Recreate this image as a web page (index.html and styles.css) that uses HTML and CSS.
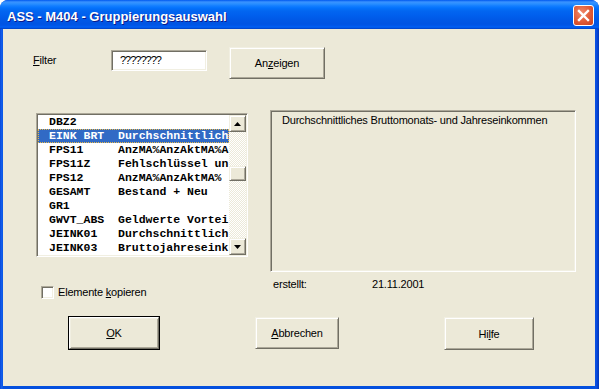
FILE: index.html
```html
<!DOCTYPE html>
<html lang="de">

<head>
    <meta charset="UTF-8">
    <meta name="viewport" content="width=device-width, initial-scale=1.0">
    <link rel="stylesheet" href="styles.css">
    <title>ASS - M404 - Gruppierungsauswahl</title>
</head>

<body>

    <div class="window">
        <header class="titlebar">
            <span class="title">ASS - M404 - Gruppierungsauswahl</span>
            <button class="close-btn">
                <svg width="19" height="19" viewBox="0 0 19 19">
                    <path d="M5 5 L14 14 M14 5 L5 14" stroke="#fff" stroke-width="2.4" stroke-linecap="square" />
                </svg>
            </button>
        </header>

        <div class="client">

            <div class="filter-row">
                <span class="filter-label"><u>F</u>ilter</span>
                <div class="textbox">????????</div>
                <div class="btn btn-show">An<u>z</u>eigen</div>
            </div>

            <div class="main">
                <div class="left-col">
                    <div class="listbox">
                        <div class="list-rows">
                            <div class="row"><span class="key">DBZ2</span></div>
                            <div class="row selected"><span class="key">EINK BRT</span><span class="desc">Durchschnittlich</span></div>
                            <div class="row"><span class="key">FPS11</span><span class="desc">AnzMA%AnzAktMA%A</span></div>
                            <div class="row"><span class="key">FPS11Z</span><span class="desc">Fehlschlüssel un</span></div>
                            <div class="row"><span class="key">FPS12</span><span class="desc">AnzMA%AnzAktMA%</span></div>
                            <div class="row"><span class="key">GESAMT</span><span class="desc">Bestand + Neu</span></div>
                            <div class="row"><span class="key">GR1</span></div>
                            <div class="row"><span class="key">GWVT_ABS</span><span class="desc">Geldwerte Vortei</span></div>
                            <div class="row"><span class="key">JEINK01</span><span class="desc">Durchschnittlich</span></div>
                            <div class="row"><span class="key">JEINK03</span><span class="desc">Bruttojahreseink</span></div>
                        </div>
                        <div class="scrollbar">
                            <div class="sb-btn">
                                <svg width="7" height="4" viewBox="0 0 7 4"><path d="M3.5 0 L7 4 L0 4 Z" fill="#000" /></svg>
                            </div>
                            <div class="sb-track">
                                <div class="sb-thumb"></div>
                            </div>
                            <div class="sb-btn">
                                <svg width="7" height="4" viewBox="0 0 7 4"><path d="M0 0 L7 0 L3.5 4 Z" fill="#000" /></svg>
                            </div>
                        </div>
                    </div>

                    <div class="check-row">
                        <span class="checkbox"></span>
                        <span>Elemente <u>k</u>opieren</span>
                    </div>
                </div>

                <div class="right-col">
                    <div class="desc-box">Durchschnittliches Bruttomonats- und Jahreseinkommen</div>
                    <div class="info-row">
                        <span class="info-label">erstellt:</span>
                        <span>21.11.2001</span>
                    </div>
                </div>
            </div>

            <div class="button-row">
                <div class="btn btn-ok"><u>O</u>K</div>
                <div class="btn btn-cancel"><u>A</u>bbrechen</div>
                <div class="btn btn-help">Hi<u>l</u>fe</div>
            </div>

        </div>
    </div>

</body>

</html>
```

FILE: styles.css
```css
body {
    margin: 0;
    padding: 0;
    background: #fff;
    font-family: "Liberation Sans", Arial, sans-serif;
    font-size: 11px;
    letter-spacing: -0.2px;
    color: #000;
}

.window {
    width: 599px;
    height: 389px;
    display: flex;
    flex-direction: column;
    background: linear-gradient(to right, #0A48D8, #1462F0 2px, #0450DE 3px, #0450DE 595px, #0B4FE6 596px, #0036B8);
    border-radius: 8px 8px 0 0;
    overflow: hidden;
}

.titlebar {
    height: 29px;
    flex: none;
    display: flex;
    align-items: center;
    justify-content: space-between;
    padding: 0 5px 0 7px;
    background: linear-gradient(#0058EE 0, #3A93FF 2px, #288EFF 4px, #127DFF 6px, #0472FC 8px, #0266F0 11px, #0060EE 15px, #0058E6 20px, #0054E3 24px, #0058EB 26px, #0061F6 27px, #0052DF 28px, #003DBE 29px);
}

.title {
    color: #fff;
    font-weight: bold;
    font-size: 13px;
    letter-spacing: 0;
    line-height: 16px;
    padding-top: 4px;
    text-shadow: 1px 1px #0C1A8A;
}

.close-btn {
    width: 21px;
    height: 21px;
    margin-top: 2px;
    padding: 0;
    border: 1px solid #fff;
    border-radius: 3px;
    background: radial-gradient(circle at 40% 35%, #F08A6C, #E05A36 55%, #C8401E);
    display: flex;
    align-items: center;
    justify-content: center;
}

.client {
    flex: 1;
    margin: 0 4px 3px 3px;
    background: #ECE9D8;
    display: flex;
    flex-direction: column;
}

.filter-row {
    display: flex;
    align-items: flex-start;
    height: 32px;
    margin-top: 18px;
    padding-left: 30px;
}

.filter-label {
    width: 78px;
    line-height: 13px;
    margin-top: 7px;
}

.textbox {
    width: 86px;
    height: 19px;
    margin-top: 3px;
    padding-left: 8px;
    line-height: 19px;
    letter-spacing: -1px;
    background: #fff;
    border: 1px solid;
    border-color: #ACA899 #fff #fff #ACA899;
    box-shadow: inset 1px 1px #716F64, inset -1px -1px #F1EFE2;
}

.btn {
    display: flex;
    align-items: center;
    justify-content: center;
    box-sizing: border-box;
    background: #ECE9D8;
    border: 1px solid;
    border-color: #F1EFE2 #716F64 #716F64 #F1EFE2;
    box-shadow: inset 1px 1px #fff, inset -1px -1px #ACA899;
}

.btn-show {
    width: 96px;
    height: 32px;
    margin-left: 22px;
}

.main {
    display: flex;
    margin-top: 31px;
}

.left-col {
    width: 212px;
    margin-left: 33px;
    padding-top: 3px;
}

.listbox {
    height: 140px;
    display: flex;
    background: #fff;
    border: 1px solid;
    border-color: #ACA899 #fff #fff #ACA899;
    box-shadow: inset 1px 1px #716F64, inset -1px -1px #F1EFE2;
    padding: 1px;
}

.list-rows {
    width: 191px;
    overflow: hidden;
    font-family: "Liberation Mono", "Courier New", monospace;
    font-size: 11.5px;
    font-weight: bold;
    letter-spacing: 0;
}

.row {
    height: 14px;
    line-height: 14px;
    padding-left: 11px;
    white-space: pre;
    display: flex;
}

.row .key {
    width: 69px;
    flex: none;
}

.row.selected {
    background: #316AC5;
    color: #fff;
    outline: 1px dotted #E9B94A;
    outline-offset: -1px;
}

.scrollbar {
    width: 17px;
    display: flex;
    flex-direction: column;
}

.sb-btn {
    height: 17px;
    box-sizing: border-box;
    display: flex;
    align-items: center;
    justify-content: center;
    background: #ECE9D8;
    border: 1px solid;
    border-color: #F1EFE2 #716F64 #716F64 #F1EFE2;
    box-shadow: inset 1px 1px #fff, inset -1px -1px #ACA899;
}

.sb-track {
    flex: 1;
    background: repeating-conic-gradient(#fff 0 25%, #ECE9D8 0 50%) 0 0 / 2px 2px;
}

.sb-thumb {
    height: 15px;
    margin-top: 34px;
    box-sizing: border-box;
    background: #ECE9D8;
    border: 1px solid;
    border-color: #F1EFE2 #716F64 #716F64 #F1EFE2;
    box-shadow: inset 1px 1px #fff, inset -1px -1px #ACA899;
}

.check-row {
    display: flex;
    align-items: center;
    margin-top: 29px;
    margin-left: 5px;
    height: 13px;
    line-height: 13px;
}

.checkbox {
    width: 11px;
    height: 11px;
    margin-right: 4px;
    background: #fff;
    border: 1px solid;
    border-color: #ACA899 #fff #fff #ACA899;
    box-shadow: inset 1px 1px #716F64, inset -1px -1px #F1EFE2;
}

.right-col {
    width: 306px;
    margin-left: 22px;
}

.desc-box {
    width: 283px;
    height: 157px;
    padding: 3px 10px 0 11px;
    line-height: 13px;
    border: 1px solid;
    border-color: #ACA899 #fff #fff #ACA899;
    box-shadow: inset 1px 1px #716F64, inset -1px -1px #F1EFE2;
}

.info-row {
    display: flex;
    margin-top: 6px;
    padding-left: 3px;
    line-height: 13px;
}

.info-label {
    width: 99px;
}

.button-row {
    display: flex;
    margin-top: 18px;
    padding-left: 66px;
}

.btn-ok {
    width: 90px;
    height: 32px;
    outline: 1px solid #000;
    border-color: #fff #716F64 #716F64 #fff;
    box-shadow: inset 1px 1px #F1EFE2, inset -1px -1px #ACA899;
}

.btn-cancel {
    width: 84px;
    height: 32px;
    margin-left: 96px;
}

.btn-help {
    width: 90px;
    height: 33px;
    margin-left: 105px;
}
```
